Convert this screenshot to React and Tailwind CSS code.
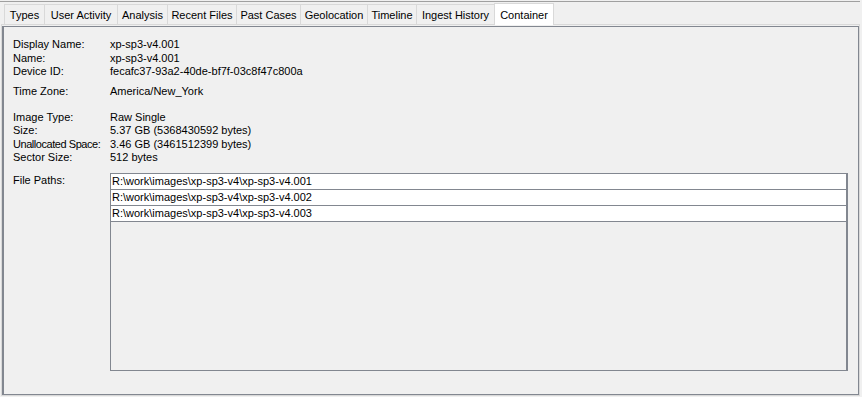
import React from 'react'

const tabs = [
  { label: 'Types', w: 'w-[40px]' },
  { label: 'User Activity', w: 'w-[73px]' },
  { label: 'Analysis', w: 'w-[50px]' },
  { label: 'Recent Files', w: 'w-[69px]' },
  { label: 'Past Cases', w: 'w-[64px]' },
  { label: 'Geolocation', w: 'w-[67px]' },
  { label: 'Timeline', w: 'w-[49px]' },
  { label: 'Ingest History', w: 'w-[78px]' },
]

const paths = [
  'R:\\work\\images\\xp-sp3-v4\\xp-sp3-v4.001',
  'R:\\work\\images\\xp-sp3-v4\\xp-sp3-v4.002',
  'R:\\work\\images\\xp-sp3-v4\\xp-sp3-v4.003',
]

function Row({ label, value, tight }) {
  return (
    <div className="flex h-[13.5px] leading-[13.5px]">
      <div className={`w-[97px] shrink-0 whitespace-nowrap ${tight ? 'tracking-[-0.45px]' : ''}`}>{label}</div>
      <div>{value}</div>
    </div>
  )
}

export default function App() {
  return (
    <div
      className="w-[862px] h-[397px] bg-[#f0f0f0] text-[11px] text-black flex flex-col overflow-hidden"
      style={{ fontFamily: '"Liberation Sans", Arial, sans-serif' }}
    >
      {/* top edge */}
      <div className="h-px" />
      <div className="h-px bg-[#a0a0a0] mr-[2px]" />

      {/* Tab strip */}
      <div className="relative z-10 flex items-end h-[21px] pl-[4px] mt-[1px]">
        {tabs.map((t) => (
          <div
            key={t.label}
            className={`${t.w} h-[20px] flex items-center justify-center pt-px border-l border-t border-[#d9d9d9] bg-[#f0f0f0] whitespace-nowrap`}
          >
            {t.label}
          </div>
        ))}
        <div className="w-[60px] h-[22px] -mb-px flex items-start pt-[3px] justify-center bg-white border-l border-t border-r border-[#d9d9d9] whitespace-nowrap">
          Container
        </div>
      </div>

      {/* Panel */}
      <div className="flex-1 ml-[1px] mr-[2px] mb-px border border-[#d9d9d9] flex flex-col">
        <div className="flex-1 mt-px border-t border-l-2 border-r border-b border-[#828790] flex flex-col pl-[9px] pt-[11px] pb-[23px] pr-[10px]">
          <Row label="Display Name:" value="xp-sp3-v4.001" />
          <Row label="Name:" value="xp-sp3-v4.001" />
          <Row label="Device ID:" value="fecafc37-93a2-40de-bf7f-03c8f47c800a" />
          <div className="mt-[6px]">
            <Row label="Time Zone:" value="America/New_York" />
          </div>
          <div className="mt-[12.5px]">
            <Row label="Image Type:" value="Raw Single" />
            <Row label="Size:" value="5.37 GB (5368430592 bytes)" />
            <Row label="Unallocated Space:" value="3.46 GB (3461512399 bytes)" tight />
            <Row label="Sector Size:" value="512 bytes" />
          </div>
          <div className="mt-[8px] flex flex-1">
            <div className="w-[97px] shrink-0 leading-[13.5px] pt-[1px]">File Paths:</div>
            <div className="flex-1 border-t border-l border-b border-r-2 border-[#828790] bg-[#f0f0f0] flex flex-col">
              {paths.map((p) => (
                <div key={p} className="h-[16px] bg-white border-b border-[#828790] leading-[15px] pl-px whitespace-nowrap">
                  {p}
                </div>
              ))}
            </div>
          </div>
        </div>
      </div>
    </div>
  )
}
